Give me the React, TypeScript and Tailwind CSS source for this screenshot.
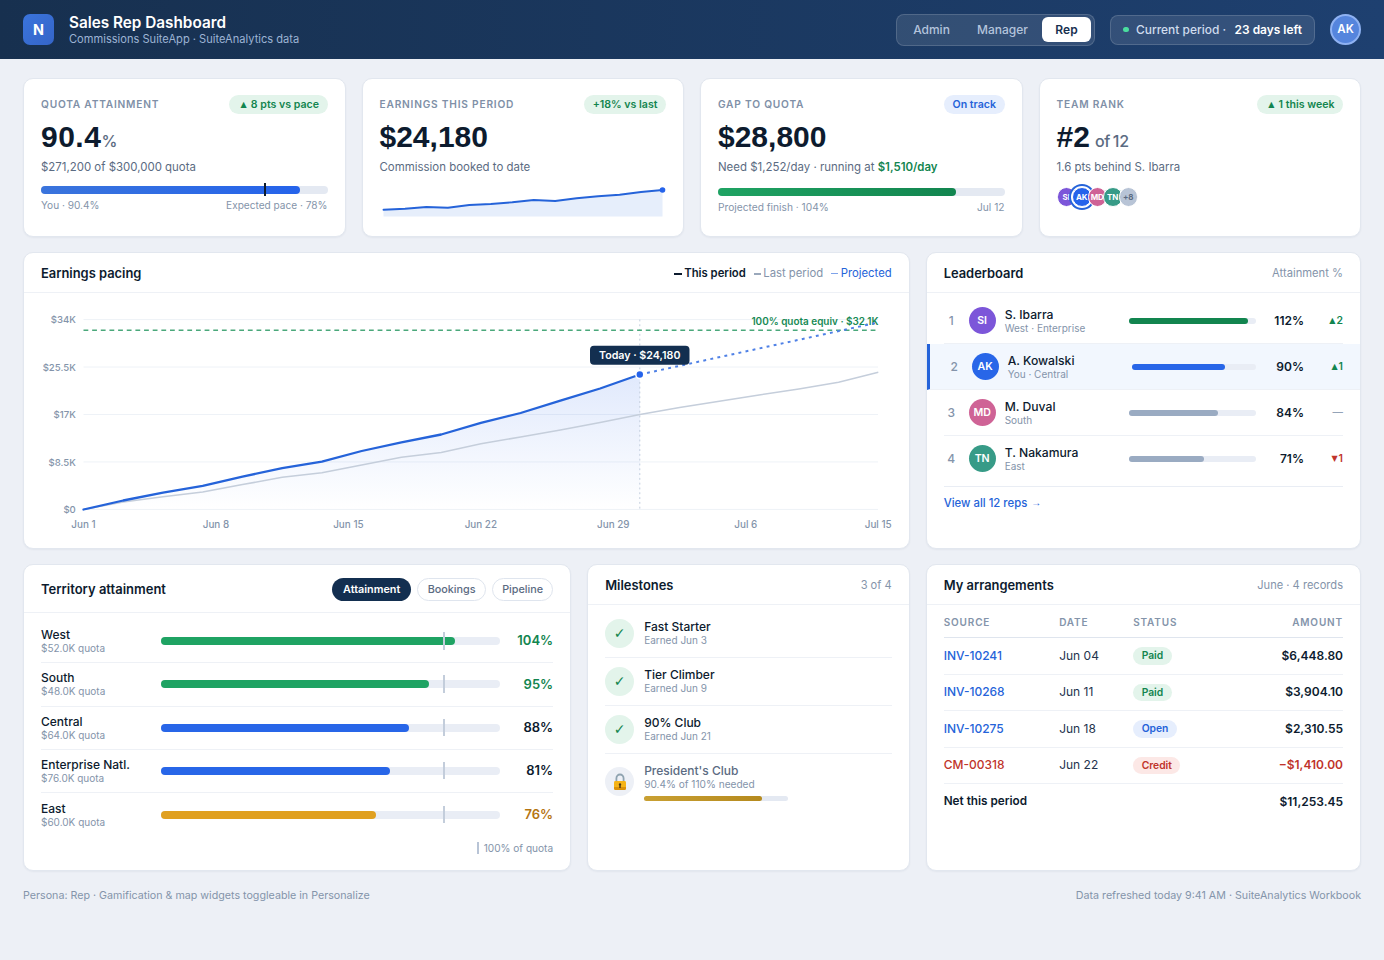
import type { ReactNode } from 'react';

function Card({ className = '', children }: { className?: string; children: ReactNode }) {
  return (
    <section
      className={`rounded-[10px] border border-[#e2e7ef] bg-white shadow-[0_1px_2px_rgba(16,42,80,0.05)] ${className}`}
    >
      {children}
    </section>
  );
}

function CardHeader({ title, children }: { title: string; children: ReactNode }) {
  return (
    <div className="flex h-[40px] items-center justify-between border-b border-[#eef1f6] px-[17px] pt-[2px]">
      <h2 className="text-[12.9px] font-semibold">{title}</h2>
      {children}
    </div>
  );
}

function Pill({ tone, up, children }: { tone: 'green' | 'blue'; up?: boolean; children: ReactNode }) {
  const color = tone === 'green' ? 'bg-[#e3f4eb] text-[#12854f]' : 'bg-[#e6eefd] text-[#2563d9]';
  return (
    <span className={`flex h-[19px] items-center rounded-full px-[8.5px] pt-px text-[10.6px] font-semibold whitespace-nowrap ${color}`}>
      {up && <span className="w-[13.5px] pr-px text-center font-['DejaVu_Sans'] text-[8px]">▲</span>}
      {children}
    </span>
  );
}

function Kpi({ label, pill, up, tone = 'green', value, note, children }: {
  label: string; pill: string; up?: boolean; tone?: 'green' | 'blue'; value: ReactNode; note: ReactNode; children: ReactNode;
}) {
  return (
    <Card className="col-span-3 h-[159px] px-[17px] pt-[16px]">
      <div className="flex h-[19px] items-start justify-between">
        <h2 className="pt-[1.5px] text-[10.2px] leading-[14px] font-semibold tracking-[0.78px] text-[#8090a7] uppercase">{label}</h2>
        <Pill tone={tone} up={up}>{pill}</Pill>
      </div>
      <div className="mt-[5px] flex h-[35px] items-baseline font-['Liberation_Sans'] text-[30px] leading-[35px] font-bold text-[#0d1b2e]">{value}</div>
      <p className="mt-[6px] text-[11.45px] leading-[15px] text-[#5b6b82]">{note}</p>
      {children}
    </Card>
  );
}

const spark = [209.7, 208.7, 207, 207.7, 205, 204, 202.3, 200, 201, 198.3, 196.3, 194.7, 192, 190];
const sparkPoints = spark.map((y, i) => `${(3.5 + i * 21.46).toFixed(1)},${(y - 184).toFixed(1)}`).join(' ');

const current = [509.5, 500.5, 492.7, 485.9, 476.6, 468.2, 461.7, 451, 442.3, 434.5, 422.9, 413, 400.7, 388.5, 374.5];
const previous = [509.5, 502, 496.7, 492, 484.6, 477.3, 472.7, 465, 457.3, 452.5, 443.7, 437, 430, 422.5, 414.6, 407.5, 401.2, 395, 389, 382.3, 372.2];
const toPoints = (ys: number[]) => ys.map((y, i) => `${(83.5 + i * 39.74).toFixed(1)},${y}`).join(' ');

const mini = [
  ['SI', 'bg-[#7c56d9]'], ['AK', 'bg-[#2563eb]'], ['MD', 'bg-[#cf6396]'], ['TN', 'bg-[#379b87]'],
];

const reps = [
  { n: 1, i: 'SI', av: 'bg-[#7c56d9]', name: 'S. Ibarra', sub: 'West · Enterprise', w: 'w-[93.5%]', bar: 'bg-[#12854f]', pct: '112%', arrow: '▲', d: '2', dc: 'text-[#12854f]' },
  { n: 2, i: 'AK', av: 'bg-[#2866e8]', name: 'A. Kowalski', sub: 'You · Central', w: 'w-[75%]', bar: 'bg-[#2866e8]', pct: '90%', arrow: '▲', d: '1', dc: 'text-[#12854f]' },
  { n: 3, i: 'MD', av: 'bg-[#cf6396]', name: 'M. Duval', sub: 'South', w: 'w-[70%]', bar: 'bg-[#9aabc2]', pct: '84%', arrow: '', d: '—', dc: 'text-[#94a3b8]' },
  { n: 4, i: 'TN', av: 'bg-[#379b87]', name: 'T. Nakamura', sub: 'East', w: 'w-[59%]', bar: 'bg-[#9aabc2]', pct: '71%', arrow: '▼', d: '1', dc: 'text-[#c0342b]' },
];

const territories = [
  { name: 'West', q: '$52.0K quota', w: 'w-[86.7%]', bar: 'bg-[#1fa363]', pct: '104%', c: 'text-[#12854f]' },
  { name: 'South', q: '$48.0K quota', w: 'w-[79.1%]', bar: 'bg-[#1fa363]', pct: '95%', c: 'text-[#12854f]' },
  { name: 'Central', q: '$64.0K quota', w: 'w-[73.2%]', bar: 'bg-[#2866e8]', pct: '88%', c: 'text-[#0d1b2e]' },
  { name: 'Enterprise Natl.', q: '$76.0K quota', w: 'w-[67.5%]', bar: 'bg-[#2866e8]', pct: '81%', c: 'text-[#0d1b2e]' },
  { name: 'East', q: '$60.0K quota', w: 'w-[63.3%]', bar: 'bg-[#e0a020]', pct: '76%', c: 'text-[#b57512]' },
];

const invoices = [
  { id: 'INV-10241', date: 'Jun 04', st: 'Paid', sc: 'bg-[#e3f4eb] text-[#12854f]', amt: '$6,448.80', neg: false },
  { id: 'INV-10268', date: 'Jun 11', st: 'Paid', sc: 'bg-[#e3f4eb] text-[#12854f]', amt: '$3,904.10', neg: false },
  { id: 'INV-10275', date: 'Jun 18', st: 'Open', sc: 'bg-[#e6eefd] text-[#2563d9]', amt: '$2,310.55', neg: false },
  { id: 'CM-00318', date: 'Jun 22', st: 'Credit', sc: 'bg-[#fce8e6] text-[#c0342b]', amt: '−$1,410.00', neg: true },
];

function Lock() {
  return (
    <svg width="14" height="18" viewBox="0 0 14 18">
      <path d="M3.4 9V5.4a3.6 3.9 0 0 1 7.2 0V9" fill="none" stroke="#8fa3b0" strokeWidth="1.8" />
      <rect x="1" y="8" width="12" height="9" rx="1.4" fill="#f5b316" />
      <path d="M1 14h12v1.6a1.4 1.4 0 0 1-1.4 1.4H2.4a1.4 1.4 0 0 1-1.4-1.4z" fill="#dc9208" />
      <path d="M7 10.3a1.2 1.2 0 0 1 .7 2.2V15H6.3v-2.5A1.2 1.2 0 0 1 7 10.3z" fill="#4a3613" />
    </svg>
  );
}

function PacingChart() {
  return (
    <svg width="884" height="254" viewBox="24 293 884 254" className="block">
      <defs>
        <linearGradient id="area" x1="0" y1="0" x2="0" y2="1">
          <stop offset="0" stopColor="#2563eb" stopOpacity="0.14" />
          <stop offset="1" stopColor="#2563eb" stopOpacity="0" />
        </linearGradient>
      </defs>
      {['$34K', '$25.5K', '$17K', '$8.5K', '$0'].map((t, i) => (
        <g key={t}>
          <line x1="83.5" x2="878" y1={319.6 + i * 47.45} y2={319.6 + i * 47.45} stroke="#eef2f7" />
          <text x="75.8" y={323.2 + i * 47.45} textAnchor="end" fontSize="9.6" fontWeight="450" fill="#8494aa">{t}</text>
        </g>
      ))}
      {['Jun 1', 'Jun 8', 'Jun 15', 'Jun 22', 'Jun 29', 'Jul 6', 'Jul 15'].map((t, i) => (
        <text key={t} x={83.5 + i * 132.45} y="527.5" textAnchor="middle" fontSize="9.9" fontWeight="450" fill="#8494aa">{t}</text>
      ))}
      <polygon points={`${toPoints(current)} 640,509.5 83.5,509.5`} fill="url(#area)" />
      <polyline points={toPoints(previous)} fill="none" stroke="#c5cedb" strokeWidth="1.5" />
      <line x1="639.8" x2="639.8" y1="319.5" y2="509.5" stroke="#c2cddd" strokeDasharray="1.9 2.9" />
      <line x1="83.5" x2="878" y1="330.2" y2="330.2" stroke="#4aa87b" strokeWidth="1.4" strokeDasharray="4.8 3.85" />
      <text x="878.5" y="324.5" textAnchor="end" fontSize="9.95" fontWeight="600" fill="#178a54">100% quota equiv · $32.1K</text>
      <line x1="640" y1="374.5" x2="878" y2="322.5" stroke="#4f81e6" strokeWidth="2" strokeDasharray="2.9 4.3" />
      <polyline points={toPoints(current)} fill="none" stroke="#2563d9" strokeWidth="2.3" strokeLinejoin="round" strokeLinecap="round" />
      <circle cx="639.8" cy="374.5" r="4" fill="#2563eb" stroke="#fff" strokeWidth="1.6" />
      <rect x="590" y="345.8" width="99.5" height="19" rx="4" fill="#132f50" />
      <text x="639.7" y="359.2" textAnchor="middle" fontSize="10.7" fontWeight="600" fill="#fff">Today · $24,180</text>
    </svg>
  );
}

export default function App() {
  return (
    <div className="min-h-[960px] w-full bg-[#edf0f6] font-[Inter,'Noto_Sans',sans-serif] text-[#0d1b2e]">
      <header className="flex h-[59px] items-center bg-linear-to-r from-[#17304f] to-[#1e4070] px-[23px]">
        <div className="flex size-[31px] items-center justify-center rounded-[7px] bg-linear-to-br from-[#3a74dc] to-[#3565c8] text-[14.4px] font-bold text-white">N</div>
        <div className="ml-[15px] pt-[2px]">
          <h1 className="text-[15.3px] leading-[18px] font-semibold text-white">Sales Rep Dashboard</h1>
          <p className="text-[11.1px] leading-[15px] text-[#9db4d4]">Commissions SuiteApp · SuiteAnalytics data</p>
        </div>
        <nav className="ml-auto flex h-[32px] items-center rounded-[8px] border border-white/15 bg-white/10 p-[3px] text-[12px] font-medium text-[#b3c4dc]">
          <span className="w-[63px] text-center">Admin</span>
          <span className="w-[79px] text-center">Manager</span>
          <span className="flex h-[25px] w-[49px] items-center justify-center rounded-[6px] bg-white font-semibold text-[#17304f]">Rep</span>
        </nav>
        <div className="ml-[15px] flex h-[30px] w-[205px] items-center rounded-[8px] border border-white/15 bg-white/10 pl-[12px] text-[11.95px] font-medium text-[#cfdcee]">
          <span className="mr-[7.5px] size-[5.5px] rounded-full bg-[#4ade9f]" />
          Current period ·
          <span className="ml-[8.5px] font-semibold text-white">23 days left</span>
        </div>
        <div className="ml-[15px] flex size-[31px] items-center justify-center rounded-full border-2 border-[#8fb2f2] bg-[#5585dd] text-[11.5px] font-semibold text-white">AK</div>
      </header>

      <main className="grid grid-cols-12 gap-x-4 gap-y-[15px] px-[23px] pt-[19px]">
        <Kpi
          label="Quota attainment"
          pill="8 pts vs pace"
          up
          value={<><span className="tracking-[0.5px]">90.4</span><span className="font-[Inter] text-[16px] font-medium text-[#5b6b82]">%</span></>}
          note="$271,200 of $300,000 quota"
        >
          <div className="relative mt-[11px] h-[8px] rounded-full bg-[#e4e9f2]">
            <div className="h-full w-[90.4%] rounded-full bg-linear-to-r from-[#3a74dc] to-[#2563eb]" />
            <div className="absolute -top-[3px] left-[78%] h-[13px] w-[2px] bg-[#0d1b2e]" />
          </div>
          <div className="mt-[5px] flex justify-between text-[10.1px] leading-[13px] text-[#8494aa]">
            <span>You · 90.4%</span>
            <span>Expected pace · 78%</span>
          </div>
        </Kpi>
        <Kpi label="Earnings this period" pill="+18% vs last" value="$24,180" note="Commission booked to date">
          <svg width="287" height="34" className="mt-[9px] block">
            <polygon points={`${sparkPoints} 282.5,32.5 3.5,32.5`} fill="#e6eefb" />
            <polyline points={sparkPoints} fill="none" stroke="#2563d9" strokeWidth="1.9" strokeLinejoin="round" strokeLinecap="round" />
            <circle cx="282.5" cy="6" r="2.8" fill="#2563eb" />
          </svg>
        </Kpi>
        <Kpi
          label="Gap to quota"
          pill="On track"
          tone="blue"
          value="$28,800"
          note={<>Need $1,252/day · running at <span className="font-semibold text-[#12854f]">$1,510/day</span></>}
        >
          <div className="mt-[13px] h-[8px] rounded-full bg-[#e4e9f2]">
            <div className="h-full w-[83%] rounded-full bg-linear-to-r from-[#1fa363] to-[#12854f]" />
          </div>
          <div className="mt-[5px] flex justify-between text-[10.2px] leading-[13px] text-[#8494aa]">
            <span>Projected finish · 104%</span>
            <span>Jul 12</span>
          </div>
        </Kpi>
        <Kpi
          label="Team rank"
          pill="1 this week"
          up
          value={<>#2<span className="ml-[5px] font-[Inter] text-[16px] font-medium tracking-[-0.2px] text-[#5b6b82] [word-spacing:-1.5px]">of 12</span></>}
          note="1.6 pts behind S. Ibarra"
        >
          <div className="mt-[12px] flex">
            {mini.map(([t, c]) => (
              <span key={t} className={`-mr-[4px] flex size-[19.5px] shrink-0 items-center justify-center rounded-full border border-white text-[8px] font-bold text-white ${c} ${t === 'AK' ? 'shadow-[0_0_0_1px_#fff,0_0_0_3px_#2563d9]' : ''}`}>
                {t}
              </span>
            ))}
            <span className="flex size-[19.5px] items-center justify-center rounded-full border border-white bg-[#b8c4d6] text-[8px] font-bold text-[#5b6b82]">+8</span>
          </div>
        </Kpi>

        <Card className="col-span-8 h-[297px] overflow-hidden">
          <CardHeader title="Earnings pacing">
            <div className="flex gap-[8px] text-[11.3px]">
              <span className="flex items-center gap-[2.5px] font-semibold"><i className="h-[2px] w-[8px] bg-[#0d1b2e]" />This period</span>
              <span className="flex items-center gap-[2.5px] text-[#8494aa]"><i className="h-[2px] w-[7px] bg-[#9aa8bb]" />Last period</span>
              <span className="flex items-center gap-[2.5px] text-[#2563d9]"><i className="h-px w-[7px] bg-[#7fa3ea]" />Projected</span>
            </div>
          </CardHeader>
          <PacingChart />
        </Card>

        <Card className="col-span-4 h-[297px] overflow-hidden">
          <CardHeader title="Leaderboard">
            <span className="text-[11.2px] text-[#8494aa]">Attainment %</span>
          </CardHeader>
          <div className="px-[17px] pt-[5px]">
            {reps.map((r) => (
              <div
                key={r.n}
                className={`flex h-[46.15px] items-center border-b border-[#eef1f6] ${r.n === 2 ? '-mx-[17px] border-l-[3px] border-l-[#2563d9] bg-[#f2f7fe] px-[17px]' : ''} ${r.n === 4 ? 'border-b-transparent' : ''}`}
              >
                <span className="w-[15px] text-center text-[12px] font-medium text-[#8494aa]">{r.n}</span>
                <span className={`ml-[10px] flex size-[27px] items-center justify-center rounded-full text-[10.6px] font-semibold text-white ${r.av}`}>{r.i}</span>
                <div className="ml-[9px] w-[124px] shrink">
                  <div className="text-[12.15px] leading-[15px] font-medium">{r.name}</div>
                  <div className="text-[10px] leading-[13px] text-[#8494aa]">{r.sub}</div>
                </div>
                <div className="h-[6px] flex-1 rounded-full bg-[#e9edf5]">
                  <div className={`h-full rounded-full ${r.w} ${r.bar}`} />
                </div>
                <span className="w-[48px] text-right text-[12px] font-semibold">{r.pct}</span>
                <span className={`flex w-[39px] items-center justify-end gap-px text-[10.4px] font-semibold ${r.dc}`}>
                  {r.arrow && <span className="font-['DejaVu_Sans'] text-[8px]">{r.arrow}</span>}
                  {r.d}
                </span>
              </div>
            ))}
            <div className="mt-[3px] flex items-center gap-[4px] border-t border-[#e9edf4] pt-[8.5px] text-[11.35px] leading-[16px] font-medium text-[#2563d9]">
              View all 12 reps
              <span className="font-['Liberation_Sans'] text-[10px]">→</span>
            </div>
          </div>
        </Card>

        <Card className="col-span-5 h-[307px]">
          <div className="flex h-[48px] items-center justify-between border-b border-[#eef1f6] px-[17px] pt-[2px]">
            <h2 className="pt-px text-[13px] font-semibold">Territory attainment</h2>
            <div className="flex gap-[6px] text-[10.8px] font-medium text-[#5b6b82]">
              <span className="flex h-[23px] w-[79px] items-center justify-center rounded-full bg-[#132f50] pt-px font-semibold text-white">Attainment</span>
              <span className="flex h-[23px] w-[69px] items-center justify-center rounded-full border border-[#dfe5ee] pt-px">Bookings</span>
              <span className="flex h-[23px] w-[61px] items-center justify-center rounded-full border border-[#dfe5ee] pt-px">Pipeline</span>
            </div>
          </div>
          <div className="px-[17px] pt-[7px]">
            {territories.map((t) => (
              <div key={t.name} className="flex h-[43.25px] items-center border-b border-[#eef1f6] last:border-0">
                <div className="w-[119.5px] shrink-0">
                  <div className="text-[12px] leading-[14px] font-medium">{t.name}</div>
                  <div className="text-[10px] leading-[12px] text-[#8494aa]">{t.q}</div>
                </div>
                <div className="relative h-[8px] flex-1 rounded-full bg-[#e9edf5]">
                  <div className={`h-full rounded-full ${t.w} ${t.bar}`} />
                  <div className="absolute -top-[5px] left-[83.3%] h-[17.5px] w-[1.5px] bg-[#c3cddb]" />
                </div>
                <span className={`w-[53px] text-right text-[13px] font-semibold ${t.c}`}>{t.pct}</span>
              </div>
            ))}
          </div>
          <div className="mt-[5.5px] flex items-center justify-end gap-[5px] px-[17px] text-[10.1px] leading-[13px] text-[#8494aa]">
            <i className="h-[12px] w-[1.5px] bg-[#b8c4d6]" />
            100% of quota
          </div>
        </Card>

        <Card className="col-span-3 h-[307px]">
          <CardHeader title="Milestones">
            <span className="text-[11.1px] text-[#8494aa]">3 of 4</span>
          </CardHeader>
          <div className="px-[17px] pt-[4.5px]">
            {[['Fast Starter', 'Earned Jun 3'], ['Tier Climber', 'Earned Jun 9'], ['90% Club', 'Earned Jun 21']].map(([a, b]) => (
              <div key={a} className="flex h-[48px] items-center border-b border-[#eef1f6]">
                <span className="flex size-[29px] items-center justify-center rounded-full bg-[#e3f4eb] font-['DejaVu_Sans'] text-[14px] text-[#12854f]">✓</span>
                <div className="ml-[10px]">
                  <div className="text-[12px] leading-[15px] font-medium">{a}</div>
                  <div className="text-[10px] leading-[13px] text-[#8494aa]">{b}</div>
                </div>
              </div>
            ))}
            <div className="flex h-[56px] items-center">
              <span className="flex size-[29px] items-center justify-center rounded-full bg-[#edf0f6]"><Lock /></span>
              <div className="ml-[10px]">
                <div className="text-[12px] leading-[15px] font-medium text-[#5b6b82]">President's Club</div>
                <div className="text-[10.1px] leading-[13px] text-[#8494aa]">90.4% of 110% needed</div>
                <div className="mt-[5px] h-[5px] w-[144px] rounded-full bg-[#e4e9f2]">
                  <div className="h-full w-[82%] rounded-full bg-linear-to-r from-[#c9a032] to-[#b58a1e]" />
                </div>
              </div>
            </div>
          </div>
        </Card>

        <Card className="col-span-4 h-[307px]">
          <CardHeader title="My arrangements">
            <span className="text-[11.1px] text-[#8494aa]">June · 4 records</span>
          </CardHeader>
          <div className="px-[17px] text-[12px]">
            <div className="grid h-[33px] grid-cols-[115.5px_74px_1fr_auto] items-center border-b border-[#dfe5ee] pt-[3px] text-[10px] font-semibold tracking-[0.85px] text-[#8494aa]">
              <span>SOURCE</span><span>DATE</span><span>STATUS</span><span>AMOUNT</span>
            </div>
            {invoices.map((r) => (
              <div key={r.id} className="grid h-[36.5px] grid-cols-[115.5px_74px_1fr_auto] items-center border-b border-[#eef1f6]">
                <span className={`font-medium ${r.neg ? 'text-[#c0342b]' : 'text-[#2563d9]'}`}>{r.id}</span>
                <span className="text-[#24344d]">{r.date}</span>
                <span className="flex"><span className={`flex h-[17.5px] items-center rounded-full px-[8.5px] text-[10.3px] font-semibold ${r.sc}`}>{r.st}</span></span>
                <span className={`font-semibold ${r.neg ? 'text-[#c0342b]' : ''}`}>{r.amt}</span>
              </div>
            ))}
            <div className="flex h-[36.5px] items-center justify-between font-semibold">
              <span className="text-[11.75px]">Net this period</span><span>$11,253.45</span>
            </div>
          </div>
        </Card>
      </main>

      <footer className="flex justify-between px-[23px] pt-[17px] text-[10.7px] leading-[16px] text-[#8494aa]">
        <span>Persona: Rep · Gamification &amp; map widgets toggleable in Personalize</span>
        <span>Data refreshed today 9:41 AM · SuiteAnalytics Workbook</span>
      </footer>
    </div>
  );
}
